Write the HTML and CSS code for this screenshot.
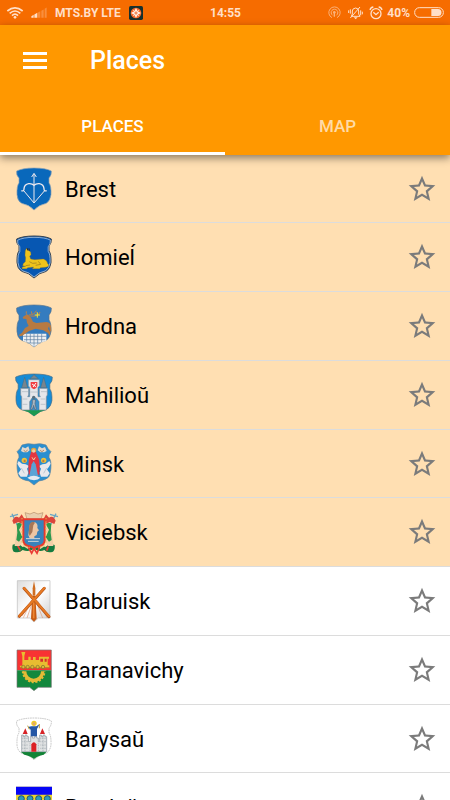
FILE: index.html
```html
<!DOCTYPE html>
<html lang="en">
<head>
<meta charset="utf-8">
<meta name="viewport" content="width=device-width, initial-scale=1">
<title>Places</title>
<link rel="stylesheet" href="styles.css">
</head>
<body>
<svg class="defs" aria-hidden="true">
  <defs>
    <path id="shield" d="M20 9Q38 0 72 0Q108 0 124 9Q125 22 117 30V45Q124 53 123 80Q121 97 109 106Q88 110 72 126Q57 110 35 106Q22 98 21 80Q20 53 27 45V30Q18 22 20 9Z"/>
    <path id="star" d="M22 9.24l-7.19-.62L12 2 9.19 8.63 2 9.24l5.46 4.73L5.82 21 12 17.27 18.18 21l-1.63-7.03L22 9.24zM12 15.4l-3.76 2.27 1-4.28-3.32-2.88 4.38-.38L12 6.1l1.71 4.04 4.38.38-3.32 2.88 1 4.28L12 15.4z"/>
  </defs>
</svg>
<div class="status">
  <div class="status-side">
    <svg class="wifi" viewBox="0 0 48 36" aria-hidden="true"><g fill="none" stroke="currentColor" stroke-width="5"><path d="M1 12Q24-7 47 12M8 19Q24 5 40 19M15 26Q24 17 33 26"/></g><circle cx="24" cy="31" r="4" fill="currentColor"/></svg>
    <svg class="signal" viewBox="0 0 48 32" aria-hidden="true"><path d="M1 32v-5l7-4v9zM10 32V22l9-5v15z" fill="currentColor"/><path d="M21 32V16l7-4v20zM31 32V11l7-4v25zM41 32V5l6-4v31z" fill="currentColor" opacity=".3"/></svg>
    <span>MTS.BY LTE</span>
    <svg class="app" viewBox="0 0 42 42" aria-hidden="true"><rect width="42" height="42" rx="5" fill="#17302d"/><circle cx="21" cy="21" r="16" fill="#f4692b"/><path d="M21 6l5 10 10 5-10 5-5 10-5-10-10-5 10-5z" fill="#fff1e5"/><path d="M12 12l18 18M30 12L12 30" stroke="#fff1e5" stroke-width="2"/><path d="M21 16v10M16 21h10" stroke="#ee6a30" stroke-width="3"/></svg>
  </div>
  <time>14:55</time>
  <div class="status-side status-end">
    <svg class="hotspot" viewBox="0 0 39 39" aria-hidden="true"><g fill="none" stroke="currentColor" stroke-width="3"><path d="M12 35a17 17 0 1 1 15 0M14 28a10 10 0 1 1 11 0"/></g><circle cx="19" cy="19" r="4" fill="currentColor"/><path d="M19 20v12" stroke="currentColor" stroke-width="4"/></svg>
    <svg class="mute" viewBox="0 0 45 42" aria-hidden="true"><g fill="none" stroke="currentColor" stroke-width="3"><path d="M10 31h26l-4-7V15q0-8-9-9-10 1-10 9v9zM7 36L36 3M2 13v8M7 10v13M38 13v15M43 17v8"/></g><path d="M17 34h12l-6 6z" fill="currentColor"/></svg>
    <svg class="alarm" viewBox="0 0 42 42" aria-hidden="true"><g fill="none" stroke="currentColor" stroke-width="4"><circle cx="21" cy="23" r="15"/><path d="M13 19l8 7 8-7M3 12Q5 4 13 3M29 3Q37 4 39 12"/></g></svg>
    <span>40%</span>
    <svg class="battery" viewBox="0 0 90 33" aria-hidden="true"><rect x="2" y="2" width="86" height="29" rx="14" fill="none" stroke="currentColor" stroke-width="3"/><path d="M52 6h20a10 10 0 0 1 0 21H52z" fill="currentColor"/></svg>
  </div>
</div>
<header class="appbar">
  <div class="toolbar">
    <button class="menu" type="button" aria-label="Menu"><svg viewBox="0 0 24 18" aria-hidden="true"><path d="M0 0h24v3H0zM0 7h24v3H0zM0 14h24v3H0z" fill="currentColor"/></svg></button>
    <h1>Places</h1>
  </div>
  <div class="tabs" role="tablist">
    <button class="tab selected" type="button" role="tab" aria-selected="true">PLACES</button>
    <button class="tab" type="button" role="tab" aria-selected="false">MAP</button>
  </div>
</header>
<main>
<ul class="places">
  <li class="place featured">
    <svg class="crest" viewBox="0 0 144 126" aria-hidden="true"><use href="#shield" fill="#0968bb" stroke="#8ba0b4" stroke-width="2"/><g fill="none" stroke="#eee9ee" stroke-width="3"><path d="M72 18v86M65 27l7-11 7 11M42 69L72 105l31-36"/><path d="M34 68q8 3 8-6 1-13 14-15 10-1 16 5 6-6 16-5 13 2 14 15 0 9 8 6" stroke-width="4"/></g></svg>
    <span class="name">Brest</span>
    <button class="fav" type="button" aria-label="Favorite Brest"><svg viewBox="0 0 24 24" aria-hidden="true"><use href="#star"/></svg></button>
  </li>
  <li class="place featured">
    <svg class="crest" viewBox="0 0 144 126" aria-hidden="true"><use href="#shield" fill="#0757b2" stroke="#384351" stroke-width="3"/><use href="#shield" transform="translate(4 4) scale(.945)" fill="none" stroke="#d7dfe7" stroke-width="2"/><path d="M46 44l4-7 7 7 5 4 1 8-4 5 3 8 12 2 26-2q11 3 13 14l4 4q-3 7-11 7l-15 1-2 3H67l4-5-18 2-3 3H36l1-5 10-2-9-2q0-7 8-12l1-12-2-7z" fill="#efc31c" stroke="#8e7220" stroke-width="1"/><path d="M51 36l3 8M57 37l1 7" stroke="#222939" stroke-width="3"/><path d="M58 77l10 5 12-1M85 76l7 9-15 3M60 87l-13 2" fill="none" stroke="#967420" stroke-width="2"/></svg>
    <span class="name">Homieĺ</span>
    <button class="fav" type="button" aria-label="Favorite Homieĺ"><svg viewBox="0 0 24 24" aria-hidden="true"><use href="#star"/></svg></button>
  </li>
  <li class="place featured">
    <svg class="crest" viewBox="0 0 144 126" aria-hidden="true"><use href="#shield" fill="#347cbf" stroke="#54728e" stroke-width="2"/><path d="M39 86h70v22l-19 5-18 12-17-12-16-5z" fill="#eef0f2"/><path d="M39 94h70M42 104h64M52 114h40M50 86v24M61 86v28M72 86v36M83 86v30M95 86v25" stroke="#5c7ea2" stroke-width="2"/><path d="M38 37l8-6 9-2 7 8 7 13 10 4 30-3 9 2 5 10 1 15-3 3-4-17-3 7 7 11-2 12-5-10-14-8-23-5-20 7-20 14-8 2-2-4 9-7 9-14 11-6-5-10-2-11-9-1z" fill="#b77a42"/><path d="M52 31q-5-5-3-12M57 30q16 0 22-13M61 33q26 3 29-12M66 28l-2-9M86 28l-6-6" fill="none" stroke="#c08245" stroke-width="3"/><path d="M82 22v16M74 30h16" stroke="#eee33a" stroke-width="3"/></svg>
    <span class="name">Hrodna</span>
    <button class="fav" type="button" aria-label="Favorite Hrodna"><svg viewBox="0 0 24 24" aria-hidden="true"><use href="#star"/></svg></button>
  </li>
  <li class="place featured">
    <svg class="crest" viewBox="0 0 144 126" aria-hidden="true"><use href="#shield" transform="translate(-4 0) scale(1.055 1)" fill="#168bd5" stroke="#486b83" stroke-width="2"/><path d="M38 109q34-5 68 0L91 113 72 126 55 114z" fill="#1d9950"/><path d="M35 108V68l-3-5V43h24v20l-3 5h6V40l-4-4V17h33v19l-4 4v28h7l-3-5V43h24v20l-3 5v40H87V83l-8-11H66l-7 11v25z" fill="#e4e6ea" stroke="#7d8a95" stroke-width="2"/><path d="M35 41l9-31 9 31zM92 41l9-31 9 31zM60 14L72 2l13 12z" fill="#77858e" stroke="#475b69" stroke-width="1"/><path d="M62 24h20v12q-1 7-10 10-9-3-10-10z" fill="#f13d41"/><path d="M66 30l12 8M78 27l-9 12" stroke="#fff" stroke-width="3"/><path d="M36 53h18M93 53h18M38 75h14M92 75h14M38 91h14M92 91h14M61 54h24" stroke="#aab5bd" stroke-width="2"/><path d="M61 83q11-14 24 0v26H61z" fill="#3c8fc9"/><circle cx="71" cy="70" r="5" fill="#566e7d"/><path d="M67 77h10l-2 12 4 17h-5l-3-12-4 12h-5l5-17z" fill="#a9b7c2" stroke="#53677a" stroke-width="2"/></svg>
    <span class="name">Mahilioŭ</span>
    <button class="fav" type="button" aria-label="Favorite Mahilioŭ"><svg viewBox="0 0 24 24" aria-hidden="true"><use href="#star"/></svg></button>
  </li>
  <li class="place featured">
    <svg class="crest" viewBox="0 0 144 126" aria-hidden="true"><path d="M36 6Q54-1 72 4q18-5 36 2 5 12 15 20-7 8-6 17 6 8 6 22 0 25-7 37-8 9-29 12l-15 12-15-12q-21-3-29-12-7-12-7-37 0-14 6-22 1-9-6-17 10-8 15-20z" fill="#2a8fd0" stroke="#5f829b" stroke-width="2"/><path d="M33 24l4-12 9 4 9-6 4 12-7 6H40zM83 22l4-12 9 6 9-4 5 12-7 4H91z" fill="#e5d8cc"/><path d="M41 22l6 4 6-5M90 22l6 4 6-5" fill="none" stroke="#b48c68" stroke-width="3"/><path d="M26 54l10 8 11 2 10 5-6 8 4 12-4 12H32l-7-10 8-12-6-8-5-9zM118 54l-10 8-11 2-10 5 6 8-4 12 4 12h19l7-10-8-12 6-8 5-9z" fill="#e8e8ec"/><circle cx="43" cy="52" r="8" fill="#efc33b"/><circle cx="101" cy="52" r="8" fill="#efc33b"/><path d="M41 50h6v8h-6zM97 50h6v8h-6z" fill="#b67c48"/><circle cx="71" cy="22" r="8" fill="#e0a63e"/><path d="M63 28q8-5 15 0l9 21 2 20-1 26H56l-1-26 2-20z" fill="#e33541"/><circle cx="71" cy="24" r="5" fill="#f0caa5"/><path d="M71 54l6 10 7 34-6 7H65l-7-7 7-34z" fill="#5aa3d6"/><path d="M66 43l5 8 5-8" fill="none" stroke="#f2d2a8" stroke-width="3"/><path d="M52 104q19-12 39 0-6 7-19 8-14-2-20-8z" fill="#e4e9f0"/><path d="M34 75l9 16M110 75l-9 16" stroke="#a4b5c4" stroke-width="2"/></svg>
    <span class="name">Minsk</span>
    <button class="fav" type="button" aria-label="Favorite Minsk"><svg viewBox="0 0 24 24" aria-hidden="true"><use href="#star"/></svg></button>
  </li>
  <li class="place featured">
    <svg class="crest" viewBox="0 0 144 126" aria-hidden="true"><path d="M8 101q18-6 30 7 20-11 34 0 15-11 34 0 13-13 28-6 2 14-5 20-18 5-26-5-14 8-31-4-16 12-34 4-10 11-27 5-6-8-3-21z" fill="#157b40"/><path d="M40 106l14 8 10-8 8 12 9-12 10 8 13-8v-8H40z" fill="#f0cf9f"/><path d="M55 109l10 18 7-14 9 14 8-19M23 104l8 14M115 106l-5 13" fill="none" stroke="#eb3b34" stroke-width="5"/><path d="M6 8l17 36M0 17l24-7M138 8l-18 36M144 17l-24-7" stroke="#6ba6c4" stroke-width="4"/><path d="M7 29q8-18 20-9l8-10 9 15-9 13-10-5-14 6zM137 29q-8-18-20-9l-9-10-8 15 9 13 10-5 14 6z" fill="#dc453b"/><path d="M24 38l13 9-4 24 8 17-12 17H14l3-35zM120 38l-13 9 4 24-8 17 12 17h15l-3-35z" fill="#f3cfa8"/><path d="M20 39q9-9 16 2l-9 15 10 22-10 14-8-5 3-22zM124 39q-9-9-16 2l9 15-10 22 10 14 8-5-3-22z" fill="#2d994d"/><path d="M45 5l15 4 12-5 12 5 15-4-6 19H51z" fill="#e9cfae" stroke="#b69069" stroke-width="2"/><path d="M40 25h64v64q-2 15-19 17l-13 5-13-5q-17-2-19-17z" fill="#3982bb" stroke="#e8392d" stroke-width="6"/><path d="M36 21v72q5 14 23 15M108 21v72q-5 14-23 15" fill="none" stroke="#e5bd42" stroke-width="3" stroke-dasharray="4 6"/><path d="M59 43q5-12 16-9 10 5 7 17l5 7-5 4-2 10-7 4v6H59l-4-9z" fill="#edc6a3"/><path d="M58 41q7-14 17-6l-5 8-3 20-8 12-3-9z" fill="#a77756"/><path d="M48 83h42M54 91h32" stroke="#d6d8d8" stroke-width="3"/></svg>
    <span class="name">Viciebsk</span>
    <button class="fav" type="button" aria-label="Favorite Viciebsk"><svg viewBox="0 0 24 24" aria-hidden="true"><use href="#star"/></svg></button>
  </li>
  <li class="place">
    <svg class="crest" viewBox="0 0 144 126" aria-hidden="true"><defs><linearGradient id="silver" x2="1" y2="1"><stop stop-color="#ddd"/><stop offset=".5" stop-color="#fff"/><stop offset="1" stop-color="#ccc"/></linearGradient></defs><path d="M22 2h98v112H85l-13 12-13-12H22z" fill="url(#silver)" stroke="#bbb" stroke-width="2"/><path d="M65 60L40 113M68 65L51 114M78 63l20 51M82 61l30 53M61 69l-25 39M86 75l27 32" stroke="#e49a75" stroke-width="2"/><path d="M67 48h9l4 68-8 9-9-9z" fill="#c75c16"/><path d="M72 3l4 22v22h-8V25z" fill="#cf6d21"/><path d="M42 25l75 85M103 25l-75 84" stroke="#b05118" stroke-width="9" stroke-linecap="round"/><path d="M42 24l75 85M103 24l-75 84" stroke="#e77a24" stroke-width="6" stroke-linecap="round"/><path d="M71 67v48" stroke="#ed8732" stroke-width="5"/></svg>
    <span class="name">Babruisk</span>
    <button class="fav" type="button" aria-label="Favorite Babruisk"><svg viewBox="0 0 24 24" aria-hidden="true"><use href="#star"/></svg></button>
  </li>
  <li class="place">
    <svg class="crest" viewBox="0 0 144 126" aria-hidden="true"><path d="M21 3h103v61H21z" fill="#f83333"/><path d="M21 64h103v51H85l-13 10-13-10H21z" fill="#13883d"/><path d="M21 3h103v112H85l-13 10-13-10H21z" fill="none" stroke="#777" stroke-width="2"/><path d="M34 9h12l-3 12v12h12V23h7v10h7v-9h8v9h10V23h30v6h-4v20h5v6H31l-2-5h8V22z" fill="#e8bd31"/><path d="M91 29h8v9h-8zM104 29h6v9h-6z" fill="#d62f2a"/><path d="M32 56h87" stroke="#b68d2c" stroke-width="3"/><g fill="#dfb637" stroke="#7c752a" stroke-width="2"><circle cx="40" cy="54" r="5"/><circle cx="53" cy="54" r="5"/><circle cx="67" cy="54" r="5"/><circle cx="83" cy="54" r="5"/><circle cx="99" cy="54" r="5"/></g><path d="M44 67a27 27 0 0 0 54 0" fill="none" stroke="#e3ba36" stroke-width="10"/><path d="M39 67a32 32 0 0 0 64 0" fill="none" stroke="#e3ba36" stroke-width="7" stroke-dasharray="6 5"/></svg>
    <span class="name">Baranavichy</span>
    <button class="fav" type="button" aria-label="Favorite Baranavichy"><svg viewBox="0 0 24 24" aria-hidden="true"><use href="#star"/></svg></button>
  </li>
  <li class="place">
    <svg class="crest" viewBox="0 0 144 126" aria-hidden="true"><use href="#shield" fill="#fff" stroke="#aaa" stroke-width="2" stroke-dasharray="5 2"/><path d="M32 101h78l-9 9q-20 4-29 13-10-9-29-13z" fill="#118336"/><path d="M35 101V51h5v5h5v-5h6v5h5v15h6V55h5v5h7v-5h6v5h5v11h4V51h5v5h5v-5h6v5h5v45z" fill="#e0e2e3" stroke="#87939a" stroke-width="2"/><path d="M37 61h17M37 71h17M37 81h17M37 91h17M91 61h17M91 71h17M91 81h17M91 91h17M45 56v43M99 56v43M60 76v23M85 76v23" stroke="#9aa5ab" stroke-width="2" stroke-dasharray="3 2"/><path d="M38 48l8-17 7 17zM90 48l7-17 8 17z" fill="#d72428"/><path d="M64 101V79q8-13 15 0v22z" fill="#dc2024"/><path d="M64 25h15l10-7-8 15v22H62V35l-8-8z" fill="#2457a5"/><circle cx="72" cy="16" r="8" fill="#f0cc27"/><circle cx="72" cy="17" r="4" fill="#dda276"/><path d="M58 34l-5-11M88 31v-13" stroke="#bc9d37" stroke-width="3"/></svg>
    <span class="name">Barysaŭ</span>
    <button class="fav" type="button" aria-label="Favorite Barysaŭ"><svg viewBox="0 0 24 24" aria-hidden="true"><use href="#star"/></svg></button>
  </li>
  <li class="place">
    <svg class="crest" viewBox="0 0 144 126" aria-hidden="true"><path d="M18 2h108v112H85l-13 12-13-12H18z" fill="#ead52e"/><path d="M18 2h108v24H18z" fill="#0606f5"/><g fill="#289bbb" stroke="#25506b" stroke-width="3"><circle cx="34" cy="38" r="9"/><circle cx="60" cy="38" r="9"/><circle cx="86" cy="38" r="9"/><circle cx="112" cy="38" r="9"/></g></svg>
    <span class="name">Braslaŭ</span>
    <button class="fav" type="button" aria-label="Favorite Braslaŭ"><svg viewBox="0 0 24 24" aria-hidden="true"><use href="#star"/></svg></button>
  </li>
</ul>
</main>
</body>
</html>
```
FILE: styles.css
```css
* { box-sizing: border-box; }
html, body { height: 100%; }
body {
  margin: 0;
  display: flex;
  flex-direction: column;
  overflow: hidden;
  background: #fff;
  color: #000;
  font-family: Roboto, "Noto Sans", sans-serif;
}
button {
  padding: 0;
  border: 0;
  background: none;
  font: inherit;
  color: inherit;
}
svg { display: block; flex: none; overflow: visible; }
.defs { position: absolute; width: 0; height: 0; }

.status {
  flex: none;
  display: grid;
  grid-template-columns: 1fr auto 1fr;
  align-items: center;
  height: 25px;
  padding: 0 6px 0 7px;
  background: #f66c00;
  color: #ffdfc8;
  font-size: 12px;
  font-weight: 700;
}
.status-side { display: flex; align-items: center; gap: 8px; }
.status-end { justify-content: flex-end; gap: 4px; }
.wifi { width: 16px; height: 12px; }
.signal { width: 16px; height: 11px; }
.app { width: 14px; height: 14px; }
.hotspot { width: 13px; height: 13px; margin-right: 3px; opacity: .6; }
.mute { width: 15px; height: 14px; margin-right: 2px; }
.alarm { width: 14px; height: 14px; }
.battery { width: 30px; height: 11px; }

.appbar {
  flex: none;
  position: relative;
  background: #ff9800;
  color: #fff;
  box-shadow: 0 3px 8px rgba(0, 0, 0, .45);
}
.toolbar {
  display: flex;
  align-items: center;
  height: 71px;
  padding-left: 23px;
  gap: 43px;
}
.menu svg { width: 24px; height: 18px; }
h1 { margin: 0; font-size: 25px; font-weight: 500; line-height: 32px; }
.tabs { display: grid; grid-template-columns: 1fr 1fr; height: 59px; }
.tab {
  border-top: 3px solid transparent;
  border-bottom: 3px solid transparent;
  font-size: 17px;
  font-weight: 500;
  color: #ffdba6;
}
.tab.selected { border-bottom-color: #fff; color: #fff; }

main { flex: 1; min-height: 0; overflow: hidden; }
.places { margin: 0; padding: 0; list-style: none; }
.place {
  display: flex;
  align-items: center;
  height: 69px;
  padding: 0 12px 0 10px;
  border-bottom: 1px solid #dcdcdc;
}
.place:nth-child(4n + 1) { height: 68px; }
.featured { background: #ffdfb2; }
.crest { width: 48px; height: 42px; }
.name { flex: 1; padding: 2px 0 0 7px; font-size: 22px; line-height: 28px; }
.fav svg { width: 32px; height: 32px; fill: #7b7b7b; }
```
